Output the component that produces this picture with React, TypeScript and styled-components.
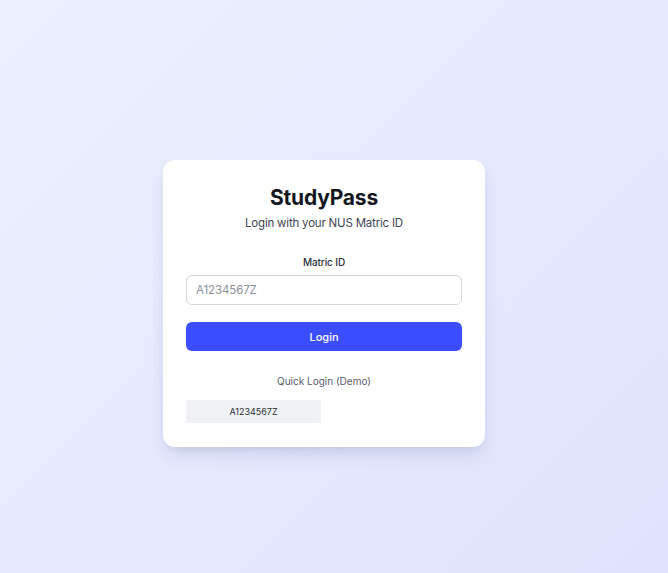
import React, { useState } from "react";
import styled, { createGlobalStyle } from "styled-components";

const Global = createGlobalStyle`
  html, body { margin: 0; padding: 0; }
  body {
    font-family: Inter, "Noto Sans", "Liberation Sans", sans-serif;
    -webkit-font-smoothing: antialiased;
  }
  * { box-sizing: border-box; }
`;

const Page = styled.div`
  min-height: 100vh;
  background: linear-gradient(135deg, #ebf0fe 0%, #e5eafe 50%, #dfe3fd 100%);
  padding: 160px 0 0 163px;
`;

const Card = styled.div`
  width: 322px;
  background: #ffffff;
  border-radius: 12px;
  box-shadow: 0 10px 18px -4px rgba(60, 70, 120, 0.16), 0 4px 8px -4px rgba(60, 70, 120, 0.1);
  padding: 24px 23px 24px;
  display: flex;
  flex-direction: column;
`;

const Title = styled.h1`
  margin: 0;
  font-size: 21px;
  line-height: 27px;
  font-weight: 700;
  color: #15171f;
  text-align: center;
  letter-spacing: -0.2px;
`;

const Subtitle = styled.p`
  margin: 3px 0 0;
  font-size: 11.5px;
  line-height: 18px;
  color: #3e4451;
  text-align: center;
  letter-spacing: -0.2px;
`;

const Field = styled.label`
  margin-top: 22px;
  display: flex;
  flex-direction: column;
  gap: 5px;
`;

const LabelText = styled.span`
  font-size: 10px;
  line-height: 16px;
  font-weight: 500;
  color: #2c313c;
  text-align: center;
  letter-spacing: -0.1px;
`;

const Input = styled.input`
  height: 30px;
  width: 100%;
  border: 1px solid #d3d6dc;
  border-radius: 6px;
  padding: 0 9px;
  font-family: inherit;
  font-size: 11.5px;
  letter-spacing: -0.1px;
  color: #1f2937;
  background: #fff;
  outline: none;
  &::placeholder { color: #8b909a; }
`;

const PrimaryButton = styled.button`
  margin-top: 17px;
  height: 29px;
  width: 100%;
  border: none;
  border-radius: 6px;
  background: #3a4dff;
  color: #fff;
  font-family: inherit;
  font-size: 11px;
  font-weight: 500;
  cursor: pointer;
`;

const QuickTitle = styled.div`
  margin-top: 23px;
  font-size: 10px;
  line-height: 14px;
  color: #5b606b;
  text-align: center;
`;

const QuickGrid = styled.div`
  margin-top: 12px;
  display: grid;
  grid-template-columns: 1fr 1fr;
  gap: 6px;
`;

const QuickButton = styled.button`
  height: 23px;
  border: none;
  border-radius: 2px;
  background: #f0f1f4;
  color: #2a2e36;
  font-family: inherit;
  font-size: 9px;
  cursor: pointer;
`;

export default function App() {
  const [id, setId] = useState("");
  return (
    <>
      <Global />
      <Page>
        <Card>
          <Title>StudyPass</Title>
          <Subtitle>Login with your NUS Matric ID</Subtitle>
          <Field>
            <LabelText>Matric ID</LabelText>
            <Input
              placeholder="A1234567Z"
              value={id}
              onChange={(e) => setId(e.target.value)}
            />
          </Field>
          <PrimaryButton>Login</PrimaryButton>
          <QuickTitle>Quick Login (Demo)</QuickTitle>
          <QuickGrid>
            <QuickButton onClick={() => setId("A1234567Z")}>A1234567Z</QuickButton>
          </QuickGrid>
        </Card>
      </Page>
    </>
  );
}
